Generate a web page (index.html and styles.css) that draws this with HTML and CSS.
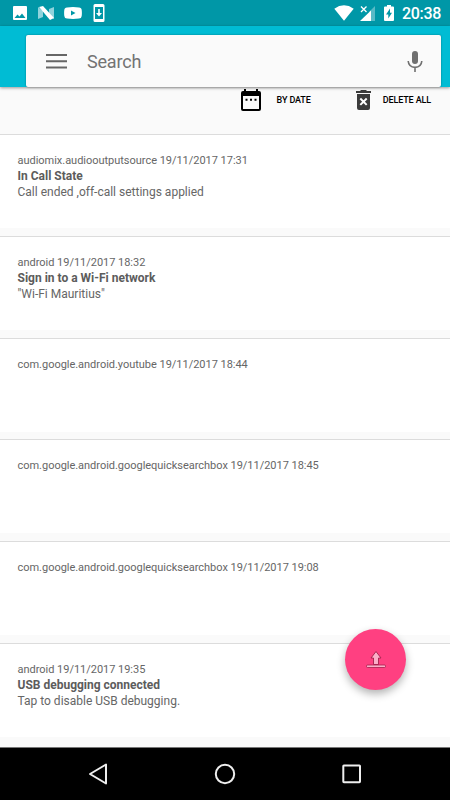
FILE: index.html
```html
<!DOCTYPE html>
<html lang="en">
<head>
    <meta charset="UTF-8">
    <meta name="viewport" content="width=device-width, initial-scale=1.0">
    <title>Notifications</title>
    <link rel="stylesheet" href="styles.css">
</head>
<body>
    <div class="screen">
        <div class="status-bar">
            <div class="status-left">
                <svg class="ic-image" width="14" height="14" viewBox="0 0 14 14"><path fill="#fff" fill-rule="evenodd" d="M1 0h12a1 1 0 0 1 1 1v12a1 1 0 0 1-1 1H1a1 1 0 0 1-1-1V1a1 1 0 0 1 1-1zM1.500 12h11L9 7.500 6.500 10.500 4.500 8.500z"/></svg>
                <svg class="ic-n" width="16" height="14" viewBox="0 0 16 14"><path fill="#8fd3dc" d="M0 1l5 4v6l-5 2zM11 3l5-2v12l-5-3z"/><path fill="#fff" d="M1 1l4-1 11 12-4 2z"/></svg>
                <svg class="ic-video" width="18" height="12" viewBox="0 0 18 12"><path fill="#fff" fill-rule="evenodd" d="M3 .4Q9-.3 15 .4q2.500 0 2.700 2.600.4 3 0 6-.2 2.600-2.700 2.600-6 .7-12 0Q.5 11.600.3 9q-.4-3 0-6Q.5.4 3 .4zM7 3.500v5L11.500 6z"/></svg>
                <svg class="ic-phone" width="12" height="18" viewBox="0 0 12 18"><path fill="#fff" fill-rule="evenodd" d="M2 0h8a1.500 1.500 0 0 1 1.500 1.500v15A1.500 1.500 0 0 1 10 18H2a1.500 1.500 0 0 1-1.500-1.500v-15A1.500 1.500 0 0 1 2 0zM2 3v12h8V3z"/><path fill="#fff" d="M5.200 5h1.600v4H9l-3 3.500L3 9h2.200z"/></svg>
            </div>
            <div class="status-right">
                <svg width="20" height="16" viewBox="0 0 20 16"><path fill="#fff" d="M.3 3.700Q10-3 19.700 3.700L10 15.700z"/></svg>
                <svg class="ic-signal" width="16" height="17" viewBox="0 0 16 17"><path fill="#58bac6" d="M15 1v15H9V7z"/><path fill="#fff" d="M0 16L11 5.500V16z"/><path stroke="#fff" stroke-width="1.300" d="M1 1.500l5.500 5.500M6.500 1.500L1 7"/></svg>
                <svg class="ic-battery" width="10" height="16" viewBox="0 0 10 16"><path fill="#fff" d="M3 0h4v1.500h2a1 1 0 0 1 1 1V15a1 1 0 0 1-1 1H1a1 1 0 0 1-1-1V2.500a1 1 0 0 1 1-1h2z"/><path fill="#0097a7" d="M6 3.500L2 9.500h2.300v4L8 7.800H6z"/></svg>
                <span class="clock">20:38</span>
            </div>
        </div>

        <div class="header">
            <div class="search">
                <svg width="21" height="15" viewBox="0 0 21 15"><path stroke="#666" stroke-width="2" d="M0 1h21M0 7.300h21M0 13.500h21"/></svg>
                <span class="search-text">Search</span>
                <svg width="16" height="21" viewBox="0 0 16 21"><rect x="5" y="0" width="6" height="13" rx="3" fill="#707070"/><path fill="none" stroke="#707070" stroke-width="1.600" d="M1.200 10Q1.600 16 8 16.400 14.400 16 14.800 10M8 16.400V21"/></svg>
            </div>
        </div>

        <div class="toolbar">
            <div class="action">
                <svg width="20" height="22" viewBox="0 0 20 22"><path fill="#000" fill-rule="evenodd" d="M3 0h2v2h10V0h2v2h1a2 2 0 0 1 2 2v16a2 2 0 0 1-2 2H2a2 2 0 0 1-2-2V4a2 2 0 0 1 2-2h1zM2 7v13h16V7z"/><path fill="#000" d="M4.500 9.800h2v2h-2zM9 9.800h2v2H9zM13.500 9.800h2v2h-2z"/></svg>
                <span>BY DATE</span>
            </div>
            <div class="action delete">
                <svg width="15" height="20" viewBox="0 0 15 20"><path fill="#3c3c3c" d="M5 0h5l1 1h4v2H0V1h4zM1 4h13v14a2 2 0 0 1-2 2H3a2 2 0 0 1-2-2z"/><path stroke="#fff" stroke-width="2" d="M4.300 8.500l6.400 6.400M10.700 8.500l-6.400 6.400"/></svg>
                <span>DELETE ALL</span>
            </div>
        </div>

        <div class="list">
            <div class="item">
                <div class="card">
                    <p class="meta">audiomix.audiooutputsource 19/11/2017 17:31</p>
                    <p class="title">In Call State</p>
                    <p class="text">Call ended ,off-call settings applied</p>
                </div>
            </div>
            <div class="item">
                <div class="card">
                    <p class="meta">android 19/11/2017 18:32</p>
                    <p class="title">Sign in to a Wi-Fi network</p>
                    <p class="text">"Wi-Fi Mauritius"</p>
                </div>
            </div>
            <div class="item">
                <div class="card">
                    <p class="meta">com.google.android.youtube 19/11/2017 18:44</p>
                </div>
            </div>
            <div class="item">
                <div class="card">
                    <p class="meta">com.google.android.googlequicksearchbox 19/11/2017 18:45</p>
                </div>
            </div>
            <div class="item">
                <div class="card">
                    <p class="meta">com.google.android.googlequicksearchbox 19/11/2017 19:08</p>
                </div>
            </div>
            <div class="item">
                <div class="card">
                    <p class="meta">android 19/11/2017 19:35</p>
                    <p class="title">USB debugging connected</p>
                    <p class="text">Tap to disable USB debugging.</p>
                </div>
            </div>
        </div>

        <div class="fab">
            <svg width="20" height="18" viewBox="0 0 20 18"><path fill="#fbaec8" stroke="#a51f4c" stroke-width=".9" stroke-linejoin="round" d="M10 .5l5 6.500h-2.500v6.500h-5V7H5z"/><rect x=".5" y="14" width="19" height="2.500" rx="1" fill="#fbaec8" stroke="#a51f4c" stroke-width=".8"/></svg>
        </div>

        <div class="nav-bar">
            <svg width="20" height="22" viewBox="0 0 20 22"><path fill="none" stroke="#eee" stroke-width="2" stroke-linejoin="round" d="M18 1.500v19L2 11z"/></svg>
            <svg width="22" height="22" viewBox="0 0 22 22"><circle cx="11" cy="11" r="9.200" fill="none" stroke="#eee" stroke-width="2"/></svg>
            <svg width="20" height="20" viewBox="0 0 20 20"><rect x="1.300" y="1.500" width="16.700" height="16.700" rx=".6" fill="none" stroke="#eee" stroke-width="2"/></svg>
        </div>
    </div>
</body>
</html>
```
FILE: styles.css
```css
* {
    margin: 0;
    padding: 0;
    box-sizing: border-box;
}

body {
    font-family: Roboto, sans-serif;
    background-color: #fafafa;
    color: #666;
}

svg {
    display: block;
    flex-shrink: 0;
}

.screen {
    position: relative;
    display: flex;
    flex-direction: column;
    width: 450px;
    height: 800px;
    overflow: hidden;
}

.status-bar {
    display: flex;
    justify-content: space-between;
    align-items: center;
    height: 26px;
    padding: 0 9px 0 13px;
    background-color: #0097a7;
    flex-shrink: 0;
}

.status-left, .status-right {
    display: flex;
    align-items: center;
}

.ic-n {
    margin-left: 11px;
}

.ic-video {
    margin-left: 10px;
}

.ic-phone {
    margin-left: 11px;
}

.ic-signal {
    margin-left: 6px;
}

.ic-battery {
    margin-left: 8px;
}

.clock {
    margin-left: 8px;
    padding-top: 2px;
    font-size: 16px;
    font-weight: 500;
    line-height: 20px;
    letter-spacing: -0.3px;
    color: #fff;
}

.header {
    height: 61px;
    padding: 9px 9px 0 26px;
    background-color: #00bcd4;
    box-shadow: 0 1px 3px rgba(0, 0, 0, 0.4);
    flex-shrink: 0;
    z-index: 1;
}

.search {
    display: flex;
    align-items: center;
    height: 52px;
    padding: 0 18px 0 20px;
    background-color: #fafafa;
    border-radius: 2px;
    box-shadow: 0 0 2px rgba(0, 0, 0, 0.4);
}

.search-text {
    flex: 1;
    margin-left: 20px;
    padding-top: 1px;
    font-size: 18px;
    letter-spacing: -0.2px;
    color: #737373;
}

.toolbar {
    display: flex;
    justify-content: flex-end;
    height: 47.2px;
    padding-right: 19px;
    font-size: 9px;
    font-weight: 500;
    letter-spacing: -0.12px;
    color: #000;
    flex-shrink: 0;
}

.action {
    display: flex;
    align-items: center;
    gap: 16px;
    height: 25px;
}

.delete {
    gap: 12px;
    margin-left: 45px;
}

.list {
    flex: 1;
}

.item {
    height: 101.7px;
    border-top: 1px solid #dcdcdc;
}

.card {
    height: 93px;
    padding: 17px 17.5px 0;
    background-color: #fff;
}

.meta {
    margin-bottom: -0.8px;
    font-size: 11px;
    line-height: 17px;
    letter-spacing: -0.025px;
}

.title, .text {
    font-size: 12px;
    line-height: 16px;
}

.title {
    font-weight: bold;
    color: #5c5c5c;
}

.fab {
    position: absolute;
    left: 345px;
    top: 629px;
    display: flex;
    justify-content: center;
    align-items: center;
    width: 61px;
    height: 61px;
    border-radius: 50%;
    background-color: #ff4081;
    box-shadow: 0 4px 8px rgba(0, 0, 0, 0.3);
}

.nav-bar {
    display: flex;
    align-items: center;
    justify-content: space-between;
    height: 53px;
    padding: 0 88px;
    border-top: 1px solid #777;
    background-color: #000;
    flex-shrink: 0;
}
```
